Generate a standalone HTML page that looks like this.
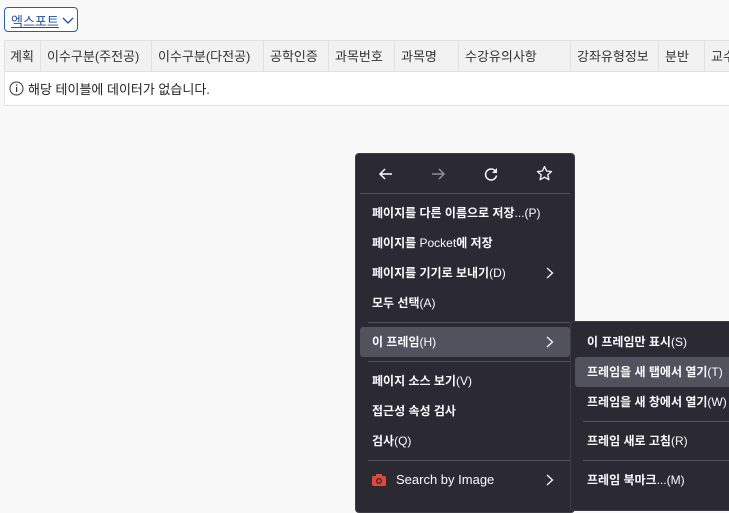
<!DOCTYPE html>
<html><head><meta charset="utf-8"><style>
*{margin:0;padding:0;box-sizing:border-box}
body{width:729px;height:499px;overflow:hidden;background:#f8f8f8;font-family:"Liberation Sans","Noto Sans CJK KR",sans-serif;position:relative;color:#333}
.btn{position:absolute;left:4px;top:7px;width:74px;height:25px;border:1px solid #2a5ea8;border-radius:4px;background:#fff;font-size:13px;color:#1f4f9a;padding:3px 0 0 6px}
.btn u{text-decoration:underline}
.tbl{position:absolute;left:4px;top:40px;width:740px;height:66px;border:1px solid #e0e0e0;background:#fff}
.hdr{position:absolute;left:0;top:0;height:31px;width:100%;background:#f2f2f2;border-bottom:1px solid #e0e0e0}
.c{position:absolute;top:0;height:31px;border-left:1px solid #e0e0e0;font-size:13px;line-height:31px;padding-left:6px;color:#333}
.empty{position:absolute;left:4px;top:38px;font-size:13px;color:#222;display:flex;align-items:center;gap:4px}
.menu{position:absolute;background:#2b2a33;border:1px solid #3e3d45;border-radius:4px;color:#fbfbfe;font-size:12px;font-weight:bold}
.it{position:absolute;left:4px;right:4px;height:30px;line-height:30px;padding-left:12px;border-radius:3px}
.it i{font-style:normal;font-weight:normal}
.hl{background:#52525e}
.sep{position:absolute;left:12px;right:4px;height:1px;background:#55545c}
.arr{position:absolute;right:16px;top:9px}
</style></head><body>
<div class="btn"><u>엑스포트</u> <svg width="12" height="8" style="vertical-align:1px"><path d="M1 1L6 6L11 1" fill="none" stroke="#1f4f9a" stroke-width="1.3"/></svg></div>
<div class="tbl">
<div class="hdr">
<div class="c" style="left:-1px;border:none">계획</div>
<div class="c" style="left:35px">이수구분(주전공)</div>
<div class="c" style="left:146px">이수구분(다전공)</div>
<div class="c" style="left:258px">공학인증</div>
<div class="c" style="left:323px">과목번호</div>
<div class="c" style="left:389px">과목명</div>
<div class="c" style="left:453px">수강유의사항</div>
<div class="c" style="left:565px">강좌유형정보</div>
<div class="c" style="left:653px">분반</div>
<div class="c" style="left:699px">교수</div>
</div>
<div class="empty"><svg width="15" height="15"><circle cx="7.5" cy="7.5" r="6.5" fill="none" stroke="#333"/><rect x="7" y="6" width="1.2" height="5" fill="#333"/><rect x="7" y="3.5" width="1.2" height="1.3" fill="#333"/></svg>해당 테이블에 데이터가 없습니다.</div>
</div>

<div class="menu" style="left:355px;top:153px;width:220px;height:360px">
<svg style="position:absolute;left:22px;top:12px" width="16" height="16"><path d="M14 8H2M7 3L2 8L7 13" fill="none" stroke="#fbfbfe" stroke-width="1.5"/></svg>
<svg style="position:absolute;left:74px;top:12px" width="16" height="16"><path d="M2 8H14M9 3L14 8L9 13" fill="none" stroke="#8f8f9d" stroke-width="1.5"/></svg>
<svg style="position:absolute;left:127px;top:12px" width="16" height="16"><path d="M13 6A5.5 5.5 0 1 0 13.5 9.5" fill="none" stroke="#fbfbfe" stroke-width="1.5"/><path d="M14 2V7H9Z" fill="#fbfbfe"/></svg>
<svg style="position:absolute;left:180px;top:11px" width="17" height="17"><path d="M8.5 1.5L10.6 6L15.5 6.5L11.8 9.8L12.9 14.7L8.5 12.2L4.1 14.7L5.2 9.8L1.5 6.5L6.4 6Z" fill="none" stroke="#fbfbfe" stroke-width="1.3" stroke-linejoin="round"/></svg>
<div class="sep" style="top:39px;left:4px"></div>
<div class="it" style="top:44px">페이지를 다른 이름으로 저장<i>...(P)</i></div>
<div class="it" style="top:74px">페이지를 <i>Pocket</i>에 저장</div>
<div class="it" style="top:104px">페이지를 기기로 보내기<i>(D)</i><svg class="arr" width="8" height="12"><path d="M1 1L6.5 6L1 11" fill="none" stroke="#fbfbfe" stroke-width="1.3"/></svg></div>
<div class="it" style="top:134px">모두 선택<i>(A)</i></div>
<div class="sep" style="top:168px"></div>
<div class="it hl" style="top:173px">이 프레임<i>(H)</i><svg class="arr" width="8" height="12"><path d="M1 1L6.5 6L1 11" fill="none" stroke="#fbfbfe" stroke-width="1.3"/></svg></div>
<div class="sep" style="top:207px"></div>
<div class="it" style="top:212px">페이지 소스 보기<i>(V)</i></div>
<div class="it" style="top:242px">접근성 속성 검사</div>
<div class="it" style="top:272px">검사<i>(Q)</i></div>
<div class="sep" style="top:306px"></div>
<div class="it" style="top:311px;padding-left:36px;font-weight:normal;font-size:13px"><svg style="position:absolute;left:12px;top:9px" width="14" height="12"><rect x="0" y="2" width="14" height="10" rx="1.5" fill="#e0463a"/><rect x="4" y="0" width="6" height="3" fill="#e0463a"/><circle cx="7" cy="7" r="2.3" fill="none" stroke="#2b2a33" stroke-width="1.3"/></svg>Search by Image<svg class="arr" width="8" height="12"><path d="M1 1L6.5 6L1 11" fill="none" stroke="#fbfbfe" stroke-width="1.3"/></svg></div>
</div>

<div class="menu" style="left:570px;top:321px;width:180px;height:190px">
<div class="it" style="top:5px">이 프레임만 표시<i>(S)</i></div>
<div class="it hl" style="top:35px">프레임을 새 탭에서 열기<i>(T)</i></div>
<div class="it" style="top:65px">프레임을 새 창에서 열기<i>(W)</i></div>
<div class="sep" style="top:99px"></div>
<div class="it" style="top:104px">프레임 새로 고침<i>(R)</i></div>
<div class="sep" style="top:138px"></div>
<div class="it" style="top:143px">프레임 북마크<i>...(M)</i></div>
</div>
</body></html>
